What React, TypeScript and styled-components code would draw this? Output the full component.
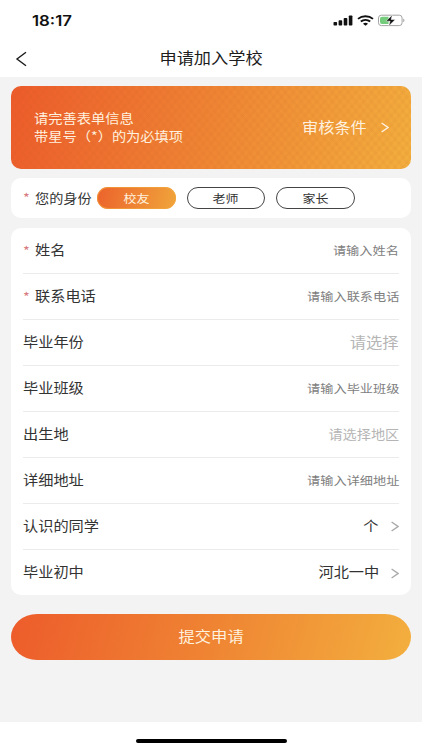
import React from 'react';
import styled, { createGlobalStyle, css } from 'styled-components';

const GlobalStyle = createGlobalStyle`
  * { box-sizing: border-box; }
  body { margin: 0; background: #f3f3f3; }
  button { border: 0; padding: 0; background: none; font: inherit; }
`;

const Screen = styled.div`
  width: 422px;
  height: 750px;
  display: flex;
  flex-direction: column;
  overflow: hidden;
  background: #f3f3f3;
  color: #333;
  font-family: 'Noto Sans CJK SC', sans-serif;
`;

/* Wide lettering: $pitch is the drawn advance of one character, $lift raises it optically. */
const Wide = styled.span<{ $pitch: number; $color?: string; $origin?: string; $lift?: number }>`
  display: block;
  margin: 0;
  font-size: ${(p) => p.$pitch / 1.12}px;
  font-weight: 400;
  line-height: 18px;
  white-space: nowrap;
  color: ${(p) => p.$color ?? 'inherit'};
  transform: translateY(${(p) => -(p.$lift ?? 1)}px) scaleX(1.12);
  transform-origin: ${(p) => p.$origin ?? 'left'} center;
`;

const StatusBar = styled.header`
  height: 41px;
  flex: none;
  display: flex;
  align-items: center;
  justify-content: space-between;
  padding: 0 17px 0 32px;
  background: #fff;
`;

const Clock = styled.span`
  font: 600 14px/20px Inter, sans-serif;
  color: #111;
  transform: scaleX(1.2);
  transform-origin: left center;
`;

const StatusIcons = styled.div`
  display: flex;
  align-items: center;
  gap: 4px;
`;

const NavBar = styled.nav`
  height: 36px;
  flex: none;
  display: grid;
  grid-template-columns: 60px 1fr 60px;
  align-items: center;
  justify-items: center;
  background: #fff;
  color: #1c1c1c;
`;

const BackButton = styled.button`
  justify-self: start;
  padding-left: 15px;
  display: flex;
`;

const Content = styled.main`
  flex: 1;
  padding: 9px 11px 0;
`;

const Banner = styled.section`
  height: 83px;
  display: flex;
  align-items: center;
  justify-content: space-between;
  padding: 0 22px 0 23px;
  border-radius: 10px;
  color: #fff1df;
  background:
    repeating-linear-gradient(50deg, rgba(190, 90, 30, 0.05) 0 2.5px, transparent 3.5px 6px),
    repeating-linear-gradient(-50deg, rgba(190, 90, 30, 0.05) 0 2.5px, transparent 3.5px 6px),
    linear-gradient(105deg, #ed5b2b 0%, #ef8534 50%, #f3af3e 100%);
`;

const Conditions = styled.button`
  display: flex;
  align-items: center;
  gap: 14px;
  color: inherit;
`;

const IdentityCard = styled.section`
  height: 40px;
  margin-top: 9px;
  display: flex;
  align-items: center;
  padding-left: 12px;
  border-radius: 10px;
  background: #fff;
`;

const IdentityLabel = styled.div`
  width: 74px;
  display: flex;
  align-items: center;
`;

const Star = styled.span`
  width: 11.5px;
  font: 13px/18px 'Noto Sans CJK SC', sans-serif;
  color: #d87b7e;
  transform: scaleX(1.12);
  transform-origin: left center;
`;

const Pills = styled.div`
  display: flex;
  gap: 11px;
`;

const Pill = styled.button<{ $active?: boolean }>`
  width: 78.6px;
  height: 22px;
  display: flex;
  align-items: center;
  justify-content: center;
  border-radius: 11px;
  ${(p) =>
    p.$active
      ? css`
          color: #fff1df;
          background: linear-gradient(105deg, #ec622c, #f0a53b);
          box-shadow: inset 0 0 0 1px rgba(244, 166, 58, 0.65);
        `
      : css`
          color: #333;
          border: 1px solid #444;
        `}
`;

const Form = styled.section`
  height: 367px;
  margin-top: 10px;
  padding: 0 12px;
  border-radius: 10px;
  background: #fff;
`;

const Row = styled.div`
  height: 46px;
  display: flex;
  align-items: center;
  justify-content: space-between;
  border-bottom: 1px solid #ebebeb;
  &:last-child { border-bottom: 0; }
`;

const Side = styled.div`
  display: flex;
  align-items: center;
`;

const RowArrow = styled.span`
  display: flex;
  margin-left: 12px;
`;

const Submit = styled.button`
  width: 100%;
  height: 46px;
  margin-top: 19px;
  display: flex;
  align-items: center;
  justify-content: center;
  border-radius: 26px / 23px;
  color: #fff1df;
  background: linear-gradient(105deg, #ed5c2b 0%, #ef8433 50%, #f3af3e 100%);
`;

const HomeArea = styled.footer`
  height: 28px;
  flex: none;
  display: flex;
  justify-content: center;
  padding-top: 17px;
  background: #fff;
`;

const HomeIndicator = styled.div`
  width: 151px;
  height: 4px;
  border-radius: 2px;
  background: #000;
`;

const Signal = () => (
  <svg width="20" height="11" viewBox="0 0 20 11" fill="#111">
    <rect x="0.5" y="7" width="3.6" height="3.6" rx="0.8" />
    <rect x="5.6" y="5.3" width="3.6" height="5.3" rx="0.8" />
    <rect x="10.7" y="3" width="3.6" height="7.6" rx="0.8" />
    <rect x="15.8" y="0.5" width="3.6" height="10.1" rx="0.8" />
  </svg>
);

const Wifi = () => (
  <svg width="17" height="11" viewBox="0 0 17 11" fill="none" stroke="#111" strokeWidth="1.9">
    <path d="M1 3.9C5.2.3 11.8.3 16 3.9" />
    <path d="M3.8 6.6c2.7-2.2 6.7-2.2 9.4 0" />
    <path d="M8.5 10.7 6 8.7c1.4-1.2 3.6-1.2 5 0z" fill="#111" stroke="none" />
  </svg>
);

const Battery = () => (
  <svg width="27" height="13" viewBox="0 0 27 13">
    <rect x="0.5" y="1.2" width="23.6" height="10.4" rx="2.8" fill="#fff" stroke="#a3a3a3" />
    <path d="M4 2.7h6.5v7.4H4A2 2 0 0 1 2 8.1V4.7a2 2 0 0 1 2-2z" fill="#74cc7c" />
    <path d="M25.3 4.6c1.5.5 1.5 3.1 0 3.6z" fill="#999" />
    <path d="M14.3.9 8 7.2h4.1l-1.4 4.7 6.6-6.4h-4.2z" fill="#111" stroke="#fff" strokeWidth="0.5" />
  </svg>
);

const Chevron = ({ color }: { color: string }) => (
  <svg width="8" height="11" viewBox="0 0 8 11" fill="none" stroke={color} strokeWidth="1.4">
    <path d="M.6 1 7 5.5.6 10" />
  </svg>
);

type Field = {
  label: string;
  value: string;
  pitch: number;
  color: string;
  required?: boolean;
  arrow?: boolean;
};

const fields: Field[] = [
  { label: '姓名', value: '请输入姓名', pitch: 13.2, color: '#808080', required: true },
  { label: '联系电话', value: '请输入联系电话', pitch: 13.2, color: '#808080', required: true },
  { label: '毕业年份', value: '请选择', pitch: 16.3, color: '#b5b5b5' },
  { label: '毕业班级', value: '请输入毕业班级', pitch: 13.2, color: '#808080' },
  { label: '出生地', value: '请选择地区', pitch: 14.2, color: '#b5b5b5' },
  { label: '详细地址', value: '请输入详细地址', pitch: 13.2, color: '#808080' },
  { label: '认识的同学', value: '个', pitch: 15.2, color: '#333', arrow: true },
  { label: '毕业初中', value: '河北一中', pitch: 15.2, color: '#333', arrow: true },
];

export default function App() {
  return (
    <Screen>
      <GlobalStyle />
      <StatusBar>
        <Clock>18:17</Clock>
        <StatusIcons>
          <Signal />
          <Wifi />
          <Battery />
        </StatusIcons>
      </StatusBar>
      <NavBar>
        <BackButton aria-label="返回">
          <svg width="13" height="16" viewBox="0 0 13 16" fill="none" stroke="#1c1c1c" strokeWidth="1.4">
            <path d="M11 1.2 2 8l9 6.8" />
          </svg>
        </BackButton>
        <Wide as="h1" $pitch={17.2} $origin="center" $lift={2}>申请加入学校</Wide>
      </NavBar>
      <Content>
        <Banner>
          <div>
            <Wide $pitch={14.25}>请完善表单信息</Wide>
            <Wide $pitch={14.25}>带星号（*）的为必填项</Wide>
          </div>
          <Conditions>
            <Wide $pitch={16.2} $origin="right">审核条件</Wide>
            <Chevron color="#fff1df" />
          </Conditions>
        </Banner>
        <IdentityCard>
          <IdentityLabel>
            <Star>*</Star>
            <Wide $pitch={14.2} $lift={0}>您的身份</Wide>
          </IdentityLabel>
          <Pills>
            {['校友', '老师', '家长'].map((name, i) => (
              <Pill key={name} $active={i === 0}>
                <Wide $pitch={13} $origin="center" $lift={0}>{name}</Wide>
              </Pill>
            ))}
          </Pills>
        </IdentityCard>
        <Form>
          {fields.map((f) => (
            <Row key={f.label}>
              <Side>
                {f.required && <Star>*</Star>}
                <Wide $pitch={15.2} $lift={2}>{f.label}</Wide>
              </Side>
              <Side>
                <Wide $pitch={f.pitch} $color={f.color} $origin="right" $lift={f.arrow ? 2 : 1}>
                  {f.value}
                </Wide>
                {f.arrow && (
                  <RowArrow>
                    <Chevron color="#aaa" />
                  </RowArrow>
                )}
              </Side>
            </Row>
          ))}
        </Form>
        <Submit>
          <Wide $pitch={16.3} $origin="center">提交申请</Wide>
        </Submit>
      </Content>
      <HomeArea>
        <HomeIndicator />
      </HomeArea>
    </Screen>
  );
}
